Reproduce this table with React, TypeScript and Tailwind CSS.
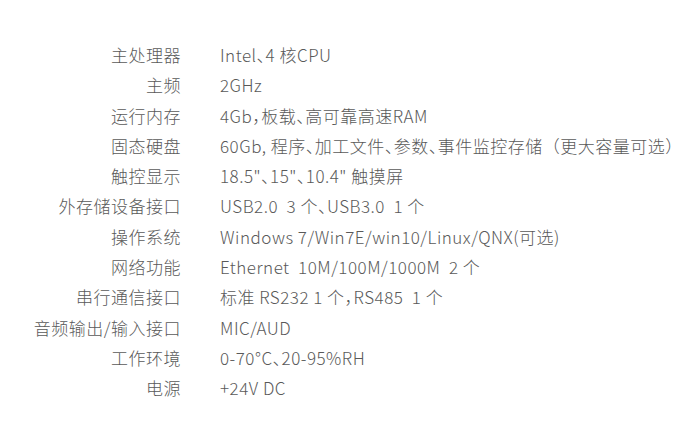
import React from 'react';

const SPECS: [string, React.ReactNode][] = [
    ['主处理器', 'Intel、4 核CPU'],
    ['主频', '2GHz'],
    ['运行内存', '4Gb，板载、高可靠高速RAM'],
    [
        '固态硬盘',
        <>
            60Gb, 程序、加工文件、参数、事件监控存储
            <span className="[font-feature-settings:normal]">（</span>
            更大容量可选）
        </>,
    ],
    ['触控显示', '18.5"、15"、10.4" 触摸屏'],
    ['外存储设备接口', 'USB2.0  3 个、USB3.0  1 个'],
    ['操作系统', 'Windows 7/Win7E/win10/Linux/QNX(可选)'],
    ['网络功能', 'Ethernet  10M/100M/1000M  2 个'],
    ['串行通信接口', '标准 RS232 1 个，RS485  1 个'],
    ['音频输出/输入接口', 'MIC/AUD'],
    ['工作环境', '0-70°C、20-95%RH'],
    ['电源', '+24V DC'],
];

const App: React.FC = () => {
    return (
        <div
            className="w-[700px] h-[439px] bg-white pt-[40px] text-[17px] leading-[30.3px] tracking-[0.5px] text-[#595959] font-light whitespace-pre [font-feature-settings:'halt']"
            style={{ fontFamily: '"Noto Sans CJK SC", "Noto Sans", sans-serif' }}
        >
            {SPECS.map(([label, value]) => (
                <div key={label} className="flex">
                    <div className="w-[181px] text-right">{label}</div>
                    <div className="ml-[39px]">{value}</div>
                </div>
            ))}
        </div>
    );
};

export default App;
